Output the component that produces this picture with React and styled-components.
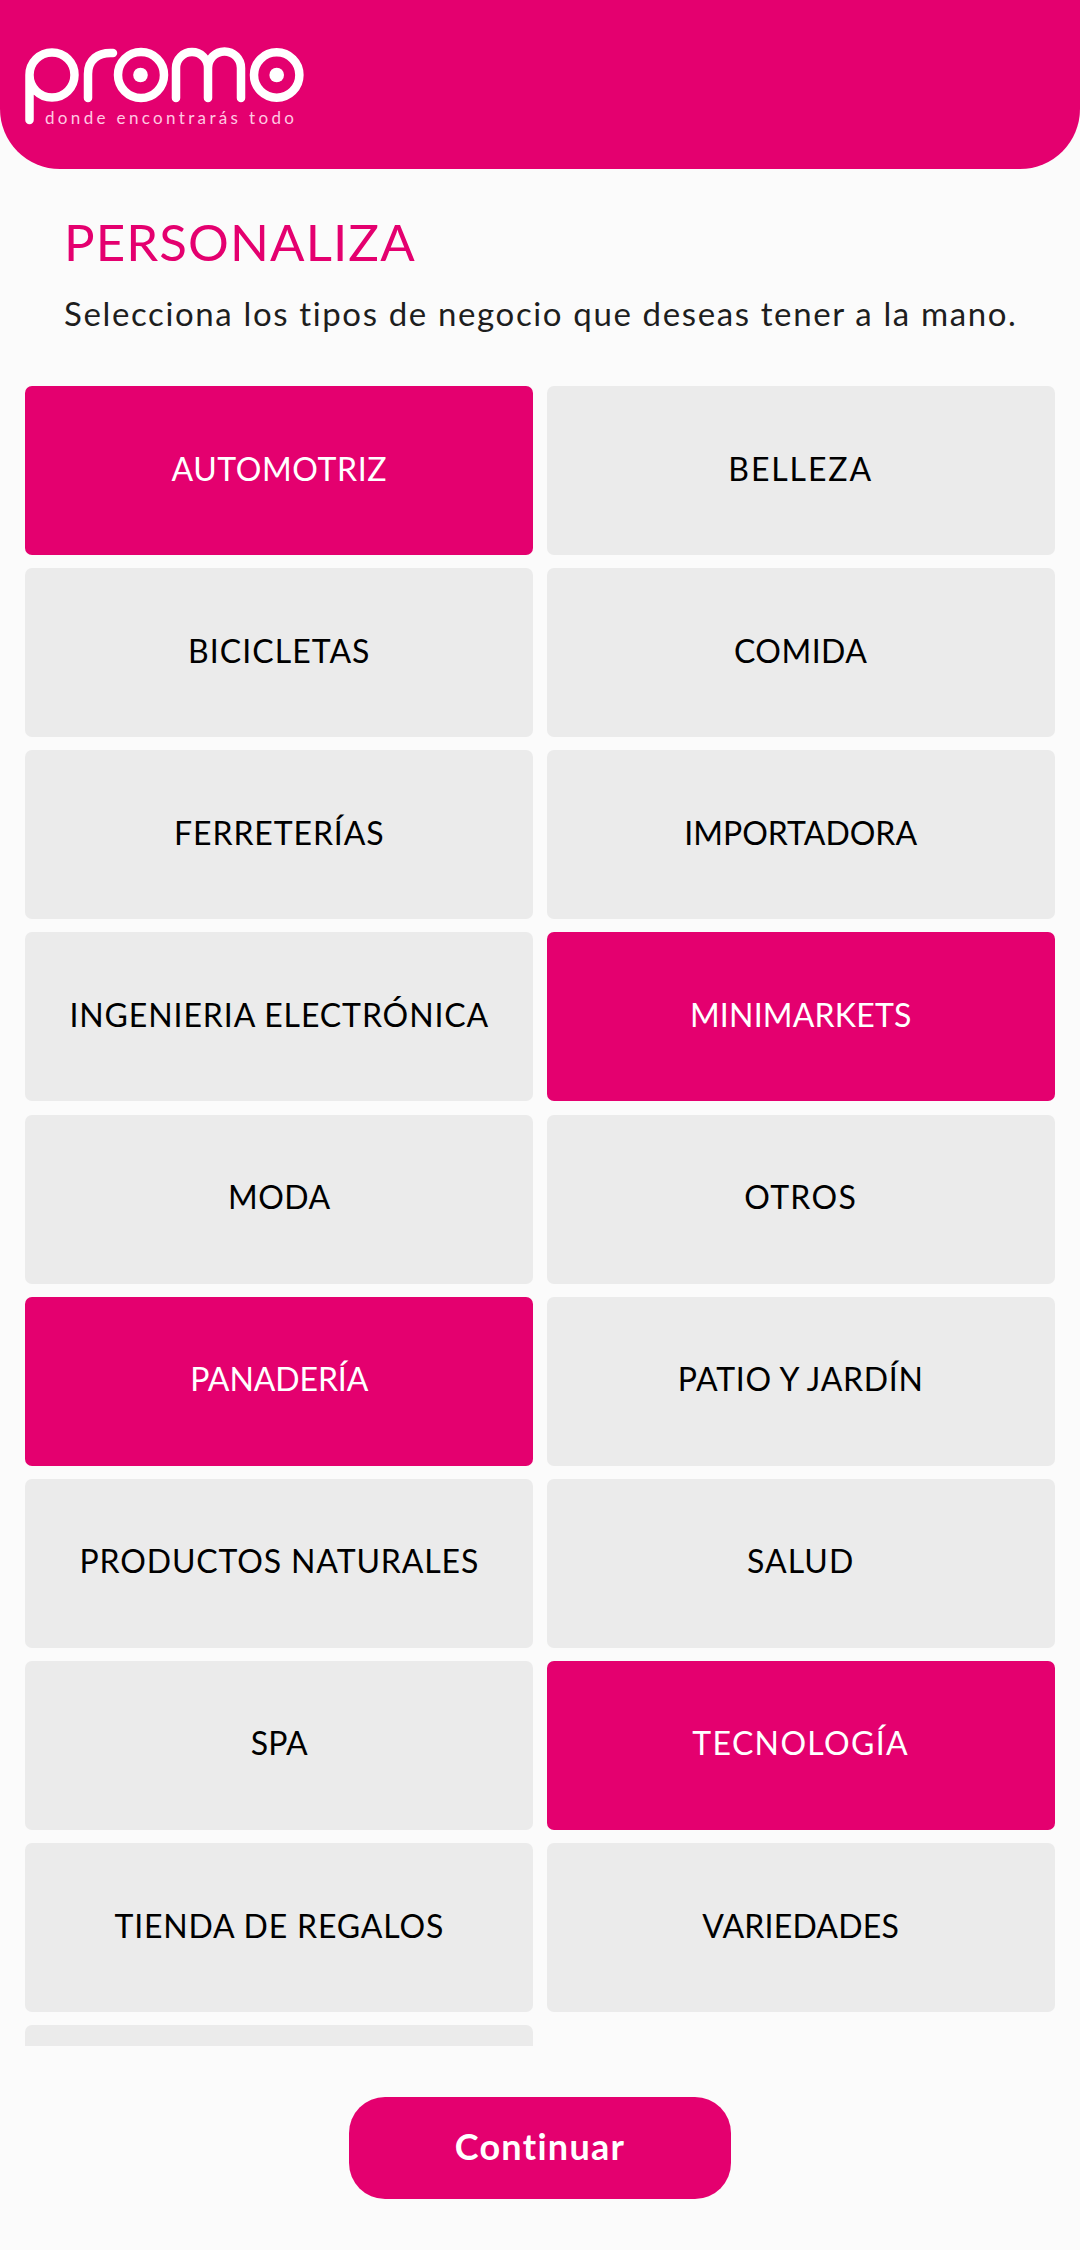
import React from "react";
import styled, { createGlobalStyle } from "styled-components";

const PINK = "#e4006f";
const FONT = `"Lato", "Noto Sans", sans-serif`;

const Global = createGlobalStyle`
  html, body { margin: 0; padding: 0; background: #fbfbfb; }
  * { box-sizing: border-box; }
`;

const Page = styled.div`
  width: 1080px;
  height: 2250px;
  background: #fbfbfb;
  font-family: ${FONT};
  display: flex;
  flex-direction: column;
  overflow: hidden;
`;

const Header = styled.header`
  height: 169px;
  flex: none;
  background: ${PINK};
  border-radius: 0 0 60px 60px;
`;

const LogoSvg = styled.svg`
  display: block;
  width: 320px;
  height: 140px;
`;

const Intro = styled.section`
  flex: none;
  height: 217px;
  padding: 43px 0 0 64px;
`;

const Title = styled.h1`
  margin: 0;
  font-size: 51px;
  line-height: 60px;
  font-weight: 400;
  color: ${PINK};
  letter-spacing: 1.1px;
`;

const Subtitle = styled.p`
  margin: 21px 0 0;
  font-size: 33px;
  line-height: 40px;
  font-weight: 400;
  color: #1e1e1e;
  letter-spacing: 1.63px;
  white-space: nowrap;
`;

const Scroller = styled.div`
  flex: none;
  height: 1660px;
  overflow: hidden;
  padding: 0 25.3px;
`;

const Grid = styled.div`
  display: grid;
  grid-template-columns: 508px 508px;
  grid-auto-rows: 169px;
  row-gap: 13.15px;
  column-gap: 13.4px;
`;

const Card = styled.div`
  display: flex;
  align-items: center;
  justify-content: center;
  padding-bottom: 5px;
  border-radius: 7px;
  background: ${(p) => (p.$on ? PINK : "#ebebeb")};
  color: ${(p) => (p.$on ? "#ffffff" : "#000000")};
  font-size: 32px;
  font-weight: 400;
  letter-spacing: ${(p) => p.$track}px;
  white-space: nowrap;
`;

const Footer = styled.footer`
  flex: 1;
  display: flex;
  justify-content: center;
  padding-top: 51px;
`;

const Button = styled.button`
  width: 382px;
  height: 102px;
  border: 0;
  padding: 0 0 5px;
  border-radius: 36px;
  background: ${PINK};
  color: #fff;
  font-family: ${FONT};
  font-size: 36px;
  font-weight: 700;
  letter-spacing: 1.3px;
`;

const items = [
  ["AUTOMOTRIZ", 0.6, true], ["BELLEZA", 1.9], ["BICICLETAS", 1.05], ["COMIDA", 0.5],
  ["FERRETERÍAS", 0.9], ["IMPORTADORA", 0], ["INGENIERIA ELECTRÓNICA", 0.9], ["MINIMARKETS", 0.2, true],
  ["MODA", 0.5], ["OTROS", 1.3], ["PANADERÍA", -0.1, true], ["PATIO Y JARDÍN", 0.7],
  ["PRODUCTOS NATURALES", 0.87], ["SALUD", 1.05], ["SPA", 0.2], ["TECNOLOGÍA", 1.35, true],
  ["TIENDA DE REGALOS", 0.84], ["VARIEDADES", 0.2], ["", 0],
];

const Logo = () => (
  <LogoSvg viewBox="0 0 320 140">
    <g fill="none" stroke="#fff" strokeWidth="8.5" strokeLinecap="round">
      <path d="M29.5 120V75A22.5 22.5 0 1 1 52 97.5A22.5 22.5 0 0 1 29.5 75" />
      <path d="M88 98V74C88 60 98 52 113 53" />
      <circle cx="141" cy="75" r="23" />
      <path d="M176 98V68A16 16 0 0 1 208 68V98M208 68A16.5 16.5 0 0 1 241 68V98" />
      <circle cx="276.7" cy="75" r="22.7" />
    </g>
    <circle cx="140.5" cy="75" r="7.3" fill="#fff" />
    <circle cx="276.7" cy="75" r="7.3" fill="#fff" />
    <text x="45" y="124" fontFamily={FONT} fontSize="17" fontWeight="400" letterSpacing="3.35" fill="#ffc8e2">
      donde encontrarás todo
    </text>
  </LogoSvg>
);

export default function App() {
  return (
    <Page>
      <Global />
      <Header>
        <Logo />
      </Header>
      <Intro>
        <Title>PERSONALIZA</Title>
        <Subtitle>Selecciona los tipos de negocio que deseas tener a la mano.</Subtitle>
      </Intro>
      <Scroller>
        <Grid>
          {items.map(([label, track, on], i) => (
            <Card key={i} $on={on} $track={track}>{label}</Card>
          ))}
        </Grid>
      </Scroller>
      <Footer>
        <Button>Continuar</Button>
      </Footer>
    </Page>
  );
}
